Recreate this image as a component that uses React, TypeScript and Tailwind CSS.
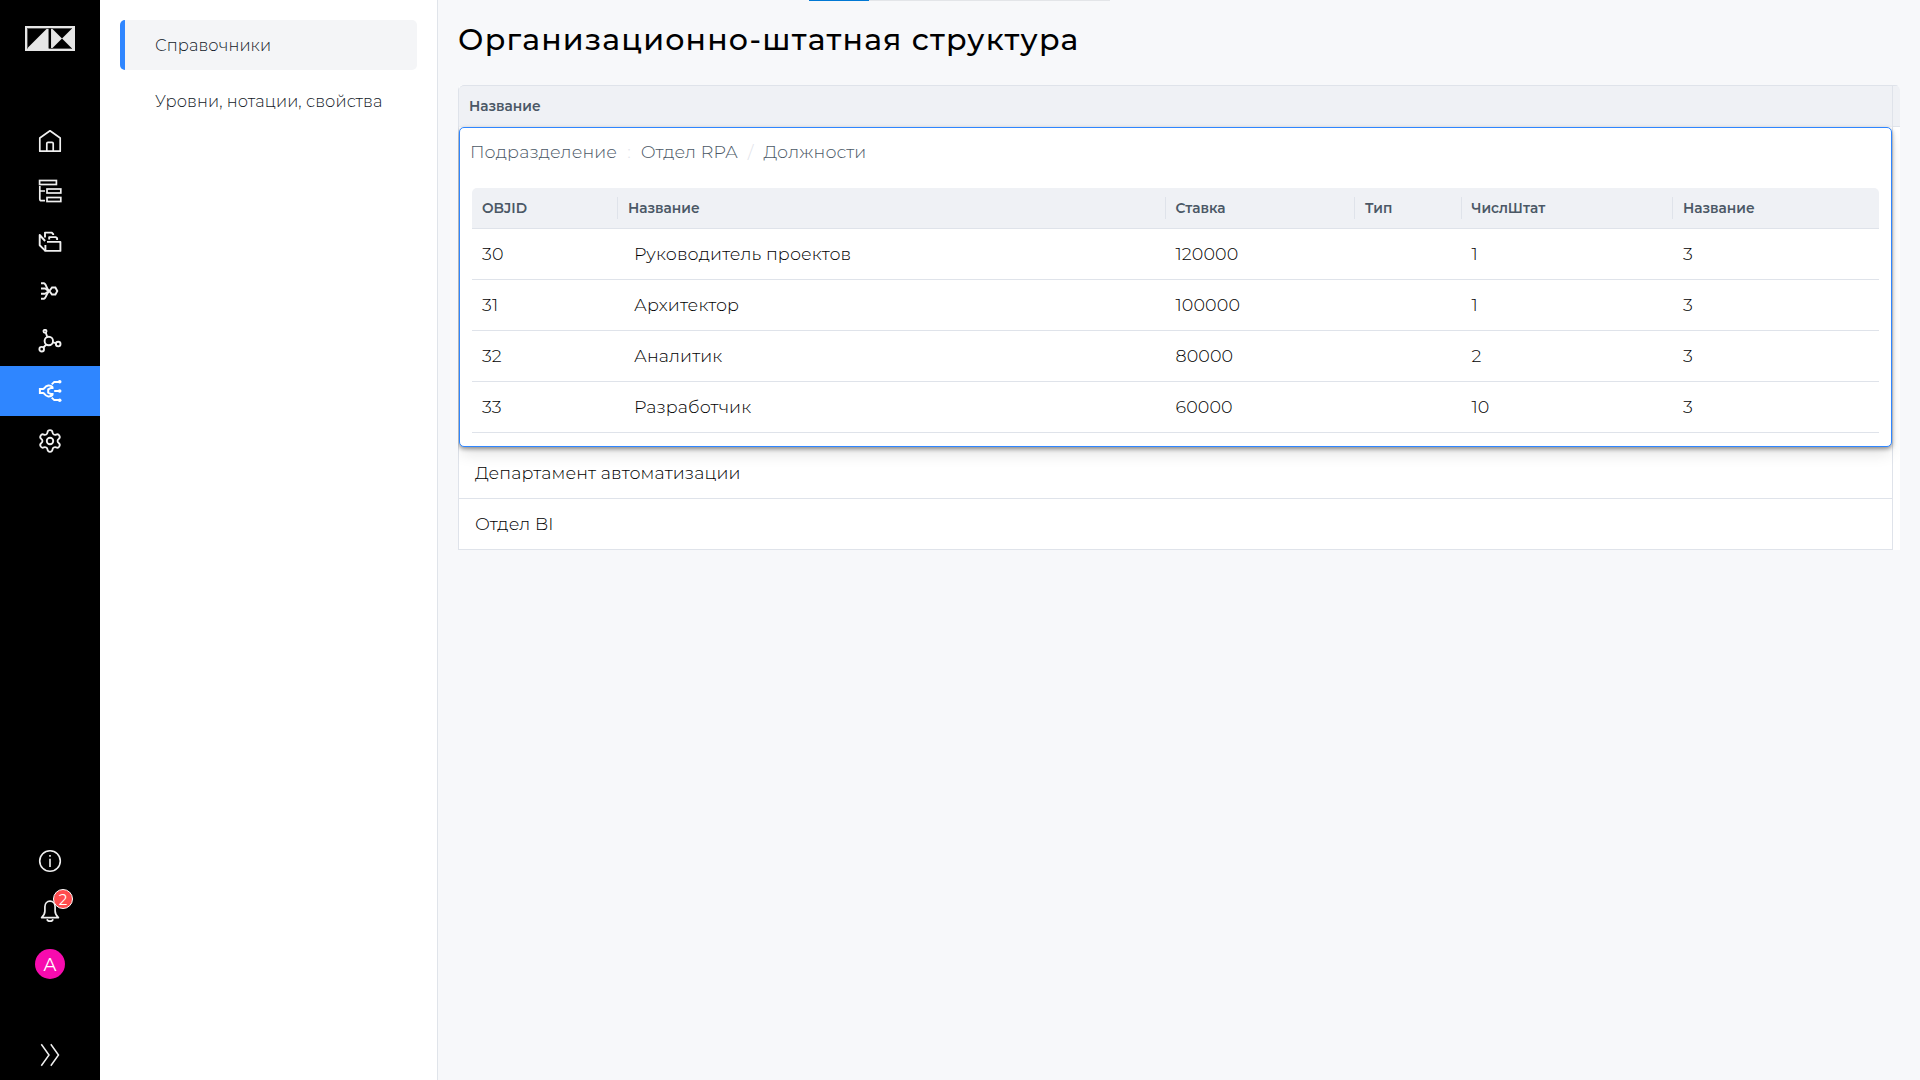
import React from 'react';
import { Settings } from 'lucide-react';

const strokeProps = {
  width: 24,
  height: 24,
  viewBox: '0 0 24 24',
  fill: 'none',
  stroke: 'currentColor',
  strokeWidth: 1.7,
};

const HomeIcon = () => (
  <svg {...strokeProps} strokeLinejoin="round">
    <path d="M12 1.8 1.8 9v13.2h20.4V9L12 1.8Z" />
    <path d="M8.8 22V14.5c0-.8.4-1.2 1.2-1.2h4c.8 0 1.2.4 1.2 1.2V22" />
  </svg>
);

const TreeIcon = () => (
  <svg {...strokeProps}>
    <rect x="1.6" y="1.5" width="16.8" height="4" />
    <rect x="9" y="10" width="13.8" height="4" />
    <rect x="9" y="18.5" width="13.8" height="4" />
    <path d="M1.8 7v13c0 1.2.6 1.7 1.7 1.7H7M1.8 12H7" />
  </svg>
);

const FolderIcon = () => (
  <svg {...strokeProps} strokeWidth={1.9} strokeLinejoin="round">
    <path d="M9 12.9h13.4v9H7.4v-6" />
    <path d="M7.4 21.9 1.7 16.3V6l5.4 6" />
    <path d="M7 8.4V3.6h6.8l1.4 1.6V6" />
    <path d="M11.2 10.6V8.1h6.6l1.3 1.2V11" />
  </svg>
);

const FlowIcon = () => (
  <svg {...strokeProps} strokeWidth={1.9}>
    <path d="M3 4.3h2.8c2.6 0 3 7.7 6.2 7.7M3 19.8h2.8c2.6 0 3-7.8 6.2-7.8" />
    <path d="M3 9.5h4c1.4 0 2 2.5 4.5 2.5M3 14.7h4c1.4 0 2-2.7 4.5-2.7" />
    <path d="m11.4 12 2.6-3.5h3.4l1.9 3.5-1.9 3.5H14L11.4 12Z" />
  </svg>
);

const NodesIcon = () => (
  <svg {...strokeProps} strokeWidth={1.9}>
    <circle cx="10.8" cy="12" r="4.2" />
    <circle cx="7" cy="2.3" r="1.5" />
    <circle cx="20.2" cy="15.1" r="2.3" />
    <circle cx="3.7" cy="20.2" r="2.3" />
    <path d="M7.8 3.8 9.3 8M14.8 13.3l3.2.9M8.4 15.3l-3 3.2" />
  </svg>
);

const AutomationIcon = () => (
  <svg {...strokeProps} strokeWidth={2}>
    <path d="M14.8 8.3C12 5.5 8.2 6.3 6.3 9.2l-1.1.9H1.9v3.8h3.3l1.1.9c1.9 2.9 5.7 3.7 8.5.9" />
    <path d="M15.5 8.9h-2.6l-2.7 1.5v3.2l2.7 1.5h2.6" />
    <path d="m13.7 5.4 2.6-2.5H22M16.2 12H22M13.7 18.6l2.6 2.5H22" />
    <g fill="currentColor" stroke="none">
      <circle cx="21.7" cy="2.8" r="1.8" />
      <circle cx="21.7" cy="12" r="1.8" />
      <circle cx="21.7" cy="21.2" r="1.8" />
    </g>
  </svg>
);

const InfoIcon = () => (
  <svg {...strokeProps} strokeWidth={1.6}>
    <circle cx="12" cy="12" r="10.3" />
    <path d="M12 9.7v8.3M12 6v1.8" />
  </svg>
);

const BellIcon = () => (
  <svg {...strokeProps} strokeLinejoin="round">
    <path d="M3.6 18.6c2.2-2 3.3-3.4 3.3-6.6V7.8C6.9 4.5 9 2.2 12 2.2s5.1 2.3 5.1 5.6V12c0 3.2 1.1 4.6 3.3 6.6H3.6Z" />
    <path d="M9 20.2c.4 1.4 1.6 2 3 2s2.6-.6 3-2" />
  </svg>
);

const ExpandIcon = () => (
  <svg {...strokeProps} strokeWidth={1.5}>
    <path d="M3.3 1.2 11 12 3.3 22.8M12.8 1.2 20.5 12l-7.7 10.8" />
  </svg>
);

const Logo = () => (
  <svg width="50" height="25" viewBox="0 0 50 25">
    <rect width="50" height="25" fill="#e6e6e6" />
    <path d="M2.5 2.5H22L2.5 22V2.5Z" fill="#000" />
    <path d="M2.5 2.5h44.5M2.5 2v20.5" stroke="#555" strokeWidth="1" />
    <path d="M24.8 2.5v20" stroke="#000" strokeWidth="2.5" />
    <path d="M24 22.5h23" stroke="#555" strokeWidth="1" />
    <path d="M27.5 3H46.5L27.5 22H46.5Z" fill="#000" />
  </svg>
);

const navItems = [
  { key: 'home', icon: <HomeIcon /> },
  { key: 'tree', icon: <TreeIcon /> },
  { key: 'folder', icon: <FolderIcon /> },
  { key: 'flow', icon: <FlowIcon /> },
  { key: 'nodes', icon: <NodesIcon /> },
  { key: 'automation', icon: <AutomationIcon />, active: true },
  { key: 'settings', icon: <Settings size={26} strokeWidth={1.7} /> },
];

const positions = [
  { id: 30, name: 'Руководитель проектов', rate: '120000', count: '1', parent: '3' },
  { id: 31, name: 'Архитектор', rate: '100000', count: '1', parent: '3' },
  { id: 32, name: 'Аналитик', rate: '80000', count: '2', parent: '3' },
  { id: 33, name: 'Разработчик', rate: '60000', count: '10', parent: '3' },
];

const columns = ['OBJID', 'Название', 'Ставка', 'Тип', 'ЧислШтат', 'Название'];

const grid = 'grid grid-cols-[146px_547.5px_189.5px_106.5px_211.5px_1fr] items-center';

const Sidebar = () => (
  <nav className="flex w-[100px] shrink-0 flex-col items-center bg-black text-[#f0f0f0]">
    <div className="flex h-[116px] pt-[26px]">
      <Logo />
    </div>
    {navItems.map((item) => (
      <div
        key={item.key}
        className={`flex h-[50px] w-full items-center justify-center ${item.active ? 'bg-[#2f86ff] text-white' : ''}`}
      >
        {item.icon}
      </div>
    ))}
    <div className="mt-auto flex h-[50px] items-center">
      <InfoIcon />
    </div>
    <div className="relative flex h-[50px] items-center">
      <BellIcon />
      <span className="absolute -right-[11px] top-[3px] flex size-5 items-center justify-center rounded-full border border-white bg-[#ff4d4f] text-[15px] leading-none text-white">
        2
      </span>
    </div>
    <div className="mt-[13px] flex size-[30px] items-center justify-center rounded-full bg-[#f70bae] pt-px text-[18px] leading-none text-white">
      А
    </div>
    <div className="mb-[13px] mt-[64px]">
      <ExpandIcon />
    </div>
  </nav>
);

const Submenu = () => (
  <aside className="w-[338px] shrink-0 border-r border-[#e0e4ea] bg-white px-5 pt-5 text-[16.25px] font-[350] tracking-[0.11px] text-[#111827]">
    <div className="flex h-[50px] w-[297px] items-center overflow-hidden rounded-[5px] bg-[#f4f5f7]">
      <div className="h-full w-[5px] bg-[#2f86ff]" />
      <span className="pl-[30px] pt-px">Справочники</span>
    </div>
    <div className="mt-[6px] flex h-[50px] items-center whitespace-nowrap pl-[35px] pt-px">
      Уровни, нотации, свойства
    </div>
  </aside>
);

const PositionsTable = () => (
  <div className="mx-3 text-black">
    <div className={`${grid} h-[41px] rounded-t-[5px] border-b border-[#dfe3ea] bg-[#eff1f5] text-[13.75px] font-semibold text-[#4b5866]`}>
      {columns.map((title, index) => (
        <div
          key={index}
          className={`flex h-[22px] items-center pl-[10px] ${index < columns.length - 1 ? 'border-r border-[#dfe3ea]' : ''}`}
        >
          {title}
        </div>
      ))}
    </div>
    {positions.map((row) => (
      <div key={row.id} className={`${grid} h-[51px] border-b border-[#dfe3ea] text-[17.5px] font-[350] tracking-[0.13px]`}>
        <div className="pl-[10px]">{row.id}</div>
        <div className="pl-[16px]">{row.name}</div>
        <div className="pl-[10px]">{row.rate}</div>
        <div />
        <div className="pl-[10px]">{row.count}</div>
        <div className="pl-[10px]">{row.parent}</div>
      </div>
    ))}
  </div>
);

const App: React.FC = () => {
  return (
    <div className="flex h-[1080px] w-[1920px] overflow-hidden bg-[#f7f8fa] font-['Montserrat','Inter',sans-serif]">
      <Sidebar />
      <Submenu />
      <main className="flex-1 pl-5">
        {/* loading strip */}
        <div className="ml-[351px] flex h-px w-[301px] bg-[#e3e5e8]">
          <div className="w-[60px] bg-[#0078d4]" />
        </div>
        <h1 className="flex h-[84px] items-start whitespace-nowrap pt-[19px] text-[30px] font-medium leading-[40px] tracking-[1.2px] text-black">
          Организационно-штатная структура
        </h1>

        <div className="flex w-[1442px] overflow-hidden rounded-t-[5px] bg-white">
          <div className="w-[1435px] border-x border-b border-[#dfe3ea]">
            <div className="flex h-[42px] items-center rounded-tl-[5px] border-t border-[#dfe3ea] bg-[#eff1f5] pl-[10px] text-[13.75px] font-semibold text-[#4b5866]">
              Название
            </div>
            <div className="relative h-[320px] rounded-[5px] border border-[#2f86ff] bg-white shadow-[0_2px_4px_rgba(0,0,0,0.4),0_8px_16px_-2px_rgba(0,0,0,0.12)]">
              <div className="flex h-[60px] items-start gap-[10px] pl-[10px] pt-[11px] text-[17.5px] font-[350] leading-[26px] tracking-[0.13px] text-[#4b5866]">
                <span>Подразделение</span>
                <span className="text-[#dfe3ea]">:</span>
                <span>Отдел RPA</span>
                <span className="text-[#dfe3ea]">/</span>
                <span>Должности</span>
              </div>
              <PositionsTable />
            </div>
            <div className="flex h-[52px] items-center border-b border-[#dfe3ea] pl-[16px] pt-px text-[17.5px] font-[350] tracking-[0.13px] text-black">
              Департамент автоматизации
            </div>
            <div className="flex h-[50px] items-center pl-[16px] text-[17.5px] font-[350] tracking-[0.13px] text-black">
              Отдел BI
            </div>
          </div>
          <div className="h-[42px] flex-1 border-y border-[#dfe3ea] bg-[#eff1f5]" />
        </div>
      </main>
    </div>
  );
};

export default App;
